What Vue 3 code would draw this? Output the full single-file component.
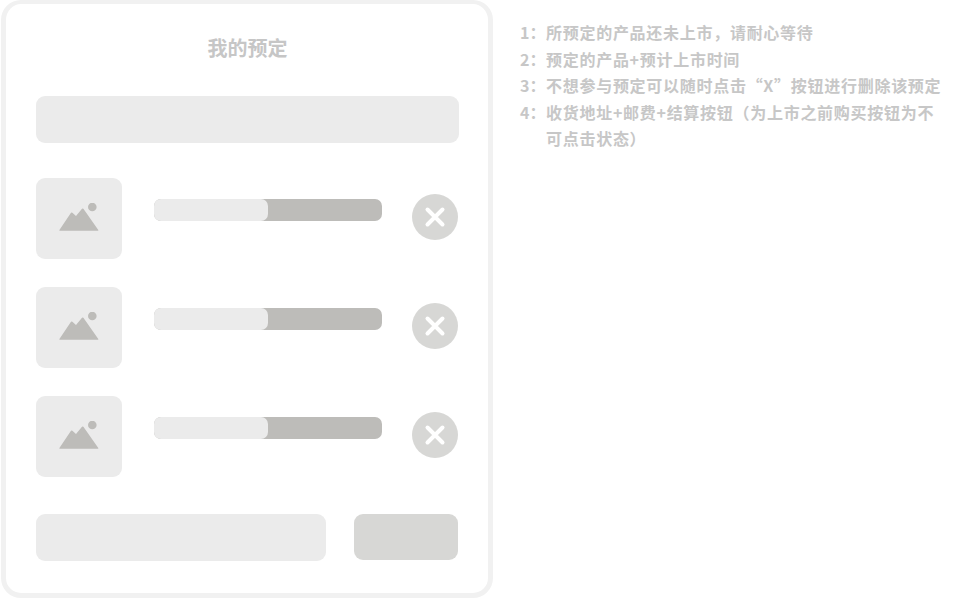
<template>
  <div class="page">
    <div class="phone">
      <h2 class="title">我的预定</h2>
      <div class="search"></div>
      <div class="list">
        <div v-for="item in items" :key="item" class="row">
          <div class="thumb">
            <svg width="40" height="30" viewBox="0 0 40 30">
              <circle cx="33.3" cy="4" r="4.3" fill="#bdbcb9" />
              <path d="M0.4 27 L12 9.8 Q12.7 9.2 13.4 9.8 L17 13 L23 5.8 Q23.7 5.1 24.4 5.8 L39.3 27 Q39.6 27.8 39 27.8 L0.7 27.8 Q0.1 27.8 0.4 27 Z" fill="#bdbcb9" />
            </svg>
          </div>
          <div class="bar"><div class="fill"></div></div>
          <div class="remove">
            <svg width="22" height="22" viewBox="0 0 22 22">
              <path d="M3.5 3.5 L18.5 18.5 M18.5 3.5 L3.5 18.5" stroke="#fff" stroke-width="4" stroke-linecap="round" />
            </svg>
          </div>
        </div>
      </div>
      <div class="footer">
        <div class="address"></div>
        <div class="buy"></div>
      </div>
    </div>
    <ol class="notes">
      <li v-for="(note, i) in notes" :key="i">
        <span class="num">{{ i + 1 }}：</span>
        <span class="text">{{ note }}</span>
      </li>
    </ol>
  </div>
</template>

<script setup>
const items = [1, 2, 3];

const notes = [
  '所预定的产品还未上市，请耐心等待',
  '预定的产品+预计上市时间',
  '不想参与预定可以随时点击“X”按钮进行删除该预定',
  '收货地址+邮费+结算按钮（为上市之前购买按钮为不可点击状态）'
];
</script>

<style>
html, body {
  background: #fff;
}
</style>

<style scoped>
.page {
  width: 978px;
  height: 600px;
  display: flex;
  overflow: hidden;
  font-family: "Noto Sans CJK SC", "Liberation Sans", sans-serif;
}

.phone {
  width: 492px;
  height: 598px;
  margin-left: 1px;
  padding: 0 29px 0 30px;
  box-sizing: border-box;
  flex-shrink: 0;
  border: 5px solid #f1f1f1;
  border-top-width: 4px;
  border-radius: 20px;
  background: #fff;
}

.title {
  margin: 0;
  padding-top: 31px;
  height: 92px;
  box-sizing: border-box;
  line-height: 26px;
  font-size: 20px;
  font-weight: 700;
  text-align: center;
  color: #c6c6c6;
}

.search {
  height: 47px;
  border-radius: 9px;
  background: #ebebeb;
}

.list {
  display: flex;
  flex-direction: column;
  gap: 28px;
  margin-top: 35px;
}

.row {
  display: flex;
  height: 81px;
}

.thumb {
  width: 86px;
  height: 81px;
  flex-shrink: 0;
  padding: 25px 0 0 23px;
  box-sizing: border-box;
  border-radius: 9px;
  background: #ebebeb;
}

.bar {
  width: 228px;
  height: 22px;
  margin: 21px 0 0 32px;
  flex-shrink: 0;
  border-radius: 7px;
  background: #bdbcb9;
}

.fill {
  width: 114px;
  height: 100%;
  border-radius: 7px;
  background: #ebebeb;
}

.remove {
  width: 46px;
  height: 46px;
  margin: 16px 0 0 30px;
  flex-shrink: 0;
  display: flex;
  align-items: center;
  justify-content: center;
  border-radius: 50%;
  background: #d7d7d5;
}

.footer {
  display: flex;
  justify-content: space-between;
  margin-top: 37px;
}

.address {
  width: 290px;
  height: 47px;
  border-radius: 9px;
  background: #ebebeb;
}

.buy {
  width: 104px;
  height: 46px;
  margin-right: 1px;
  border-radius: 9px;
  background: #d7d7d5;
}

.notes {
  width: 425px;
  margin: 0;
  padding: 19px 0 0 27px;
  list-style: none;
  font-size: 16px;
  font-weight: 700;
  letter-spacing: 0.72px;
  line-height: 26.6px;
  color: #c7c7c7;
}

.notes li {
  display: flex;
}

.num {
  width: 26px;
  flex-shrink: 0;
  white-space: nowrap;
  letter-spacing: 0;
}

.text {
  flex: 1;
}
</style>
